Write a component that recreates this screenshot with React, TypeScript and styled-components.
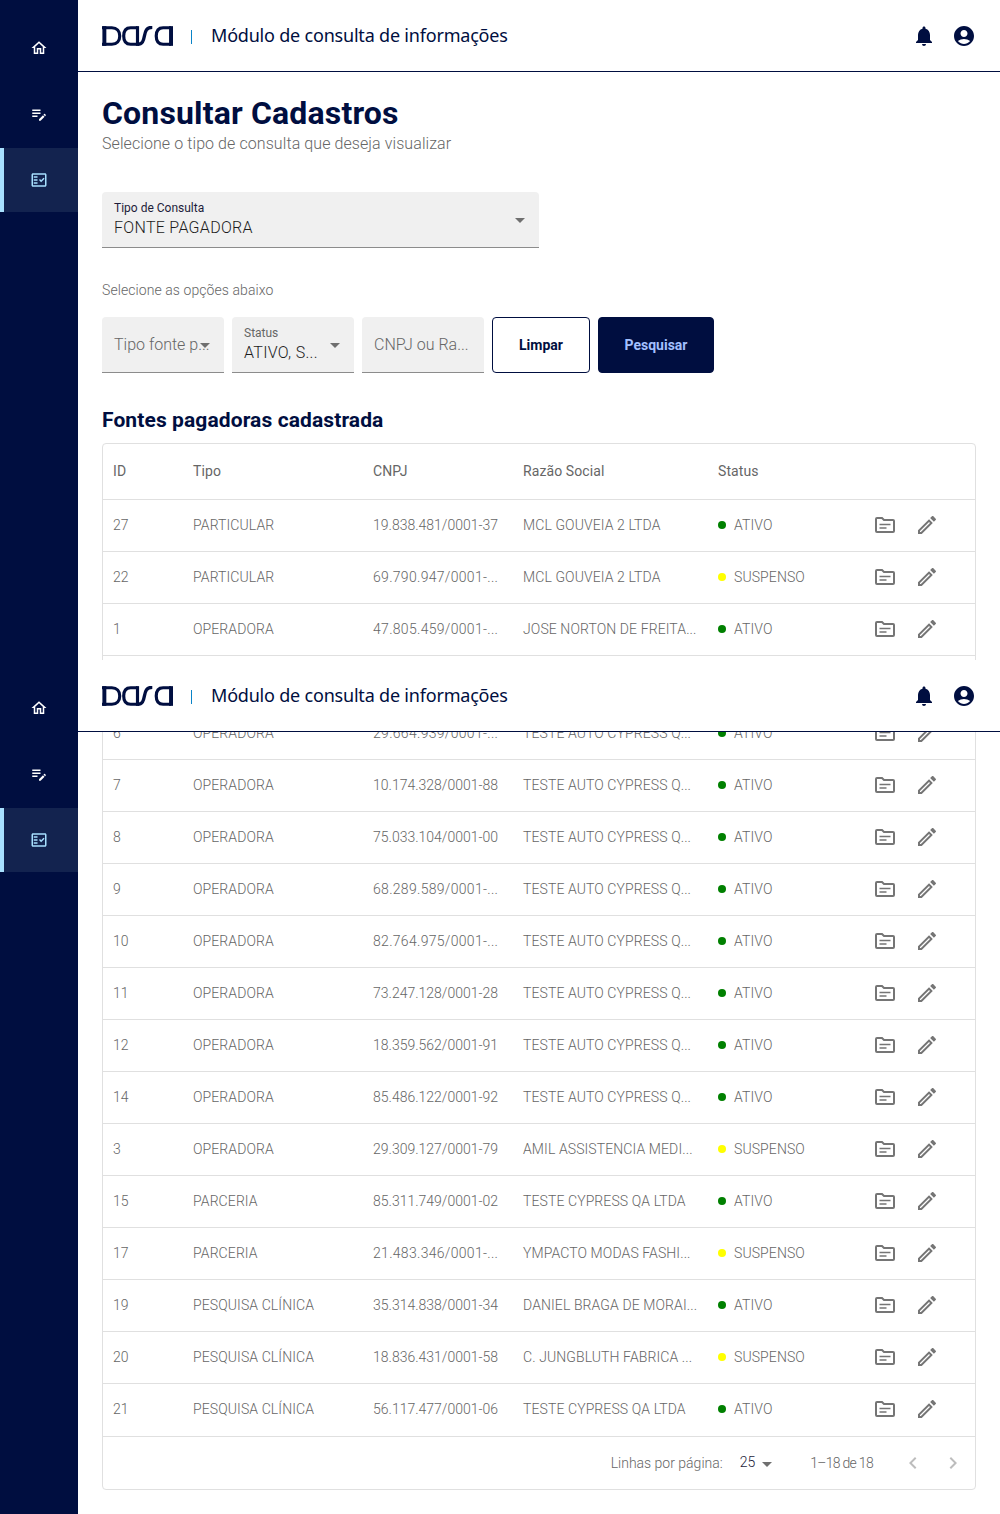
import React from "react";
import styled, { createGlobalStyle } from "styled-components";
import {
  MdOutlineHome,
  MdEditNote,
  MdOutlineFactCheck,
  MdNotifications,
  MdAccountCircle,
  MdOutlineEdit,
  MdChevronLeft,
  MdChevronRight,
} from "react-icons/md";

const NAVY = "#000e40";
const GREY = "#666";
const LINE = "#e0e0e0";
const HEADER_REPEAT_TOP = 660;

const GlobalStyle = createGlobalStyle`
  html, body {
    margin: 0;
    padding: 0;
    background: #fff;
  }
  * {
    box-sizing: border-box;
  }
`;

const Page = styled.div`
  position: relative;
  display: flex;
  width: 1000px;
  height: 1514px;
  overflow: hidden;
  font-family: Roboto, "Liberation Sans", sans-serif;
`;

const Sidebar = styled.aside`
  flex: 0 0 78px;
  background: ${NAVY};
`;

const NavGroup = styled.nav<{ $offset: number }>`
  display: flex;
  flex-direction: column;
  gap: 2px;
  margin-top: ${(p) => p.$offset}px;
`;

const NavItem = styled.div<{ $active?: boolean }>`
  display: flex;
  align-items: center;
  justify-content: center;
  height: 64px;
  color: ${(p) => (p.$active ? "#a8e0ff" : "#fff")};
  background: ${(p) => (p.$active ? "#13234f" : "transparent")};
  border-left: 4px solid ${(p) => (p.$active ? "#a8e0ff" : "transparent")};
  padding-right: 4px;
  font-size: 18px;
`;

const Main = styled.main`
  flex: 1;
  min-width: 0;
  display: flex;
  flex-direction: column;
`;

const Header = styled.header`
  display: flex;
  align-items: center;
  height: 72px;
  flex: 0 0 72px;
  padding: 0 24px;
  background: #fff;
  border-bottom: 1px solid ${NAVY};
`;

const RepeatedHeader = styled(Header)`
  position: absolute;
  top: ${HEADER_REPEAT_TOP}px;
  left: 78px;
  right: 0;
`;

const Divider = styled.span`
  width: 1px;
  height: 14px;
  margin: 2px 19px 0 18px;
  background: #0a84c8;
`;

const ModuleName = styled.span`
  flex: 1;
  margin-top: -1px;
  font-family: "Noto Sans", sans-serif;
  font-size: 18px;
  color: ${NAVY};
  letter-spacing: -0.2px;
`;

const HeaderIcons = styled.div`
  display: flex;
  gap: 16px;
  color: ${NAVY};
  font-size: 24px;
  line-height: 0;
`;

const Content = styled.div`
  padding: 23px 24px 0;
`;

const Title = styled.h1`
  margin: 0 0 2px;
  font-family: Roboto, sans-serif;
  font-size: 32px;
  line-height: 36px;
  font-weight: 700;
  letter-spacing: 0.16px;
  color: ${NAVY};
`;

const Subtitle = styled.p`
  margin: 0 0 37px;
  font-size: 16px;
  line-height: 22px;
  font-weight: 300;
  letter-spacing: 0.08px;
  color: ${GREY};
`;

const Field = styled.div<{ $width: number }>`
  position: relative;
  display: flex;
  flex-direction: column;
  justify-content: center;
  width: ${(p) => p.$width}px;
  height: 56px;
  padding: 0 12px;
  background: #f0f0f0;
  border-bottom: 1px solid #8c8c8c;
  border-radius: 4px 4px 0 0;
  overflow: hidden;
  white-space: nowrap;
`;

const FieldLabel = styled.span<{ $dark?: boolean }>`
  font-size: 12px;
  line-height: 16px;
  color: ${(p) => (p.$dark ? "#1d1d3a" : GREY)};
`;

const FieldValue = styled.span`
  font-size: 16px;
  line-height: 24px;
  font-weight: 300;
  letter-spacing: 0.3px;
  color: #1c1c1c;
`;

const Placeholder = styled.span`
  font-size: 16px;
  line-height: 24px;
  font-weight: 300;
  color: ${GREY};
`;

const Caret = styled.i<{ $right: number }>`
  position: absolute;
  top: 26px;
  right: ${(p) => p.$right}px;
  width: 0;
  height: 0;
  border-left: 5px solid transparent;
  border-right: 5px solid transparent;
  border-top: 5px solid #6f6f6f;
`;

const Hint = styled.p`
  margin: 32px 0 17px;
  font-size: 14px;
  line-height: 20px;
  font-weight: 300;
  letter-spacing: 0.08px;
  color: ${GREY};
`;

const Filters = styled.div`
  display: flex;
  gap: 8px;
`;

const Button = styled.button<{ $primary?: boolean; $width: number }>`
  width: ${(p) => p.$width}px;
  height: 56px;
  padding: 0;
  border: 1px solid ${NAVY};
  border-radius: 4px;
  background: ${(p) => (p.$primary ? NAVY : "#fff")};
  color: ${(p) => (p.$primary ? "#a3c0ff" : NAVY)};
  font-family: Roboto, sans-serif;
  font-size: 14px;
  font-weight: 700;
`;

const SectionTitle = styled.h2`
  margin: 33px 0 9px;
  font-size: 21px;
  line-height: 28px;
  font-weight: 700;
  letter-spacing: 0.1px;
  color: ${NAVY};
`;

const Card = styled.section`
  border: 1px solid ${LINE};
  border-radius: 4px;
`;

const Row = styled.div<{ $head?: boolean }>`
  display: grid;
  grid-template-columns: 80px 180px 150px 195px 1fr 100px;
  align-items: center;
  height: ${(p) => (p.$head ? 56 : 52)}px;
  padding-bottom: 1px;
  border-bottom: 1px solid ${LINE};
  font-size: 14px;
  font-weight: ${(p) => (p.$head ? 400 : 300)};
  letter-spacing: 0.1px;
  color: ${GREY};

  &:nth-last-child(2) {
    height: 53px;
    padding-bottom: 2px;
  }
`;

// row that sits entirely under the repeated header in the capture
const CoveredRow = styled.div`
  height: 52px;
  border-bottom: 1px solid ${LINE};
`;

const Cell = styled.div`
  padding-left: 10px;
  white-space: nowrap;
`;

const CnpjCell = styled(Cell)<{ $clipped: boolean }>`
  letter-spacing: ${(p) => (p.$clipped ? 0.3 : 0)}px;
`;

const StatusCell = styled(Cell)`
  display: flex;
  align-items: center;
  gap: 8px;
`;

const Dot = styled.span<{ $on: boolean }>`
  width: 8px;
  height: 8px;
  border-radius: 50%;
  background: ${(p) => (p.$on ? "#008000" : "#ffff00")};
`;

const Actions = styled.div`
  display: flex;
  align-items: center;
  gap: 20px;
  color: #757575;
  font-size: 24px;
  line-height: 0;
`;

const Footer = styled.footer`
  display: flex;
  align-items: center;
  justify-content: flex-end;
  height: 52px;
  padding-right: 10px;
  font-size: 14px;
  font-weight: 300;
  color: ${GREY};
`;

const PerPage = styled.span`
  display: flex;
  align-items: center;
  gap: 7px;
  margin: -2px 38px 0 17px;
  color: #1c1c3a;
`;

const PageRange = styled.span`
  letter-spacing: -0.7px;
`;

const SmallCaret = styled.i`
  width: 0;
  height: 0;
  margin-top: 4px;
  border-left: 5px solid transparent;
  border-right: 5px solid transparent;
  border-top: 5px solid #6f6f6f;
`;

const Pager = styled.span`
  display: flex;
  gap: 16px;
  margin-left: 28px;
  color: #bdbdbd;
  font-size: 24px;
  line-height: 0;
`;

function DasaLogo() {
  return (
    <svg width="71" height="20" viewBox="0 0 72 20" fill="none" stroke={NAVY} strokeWidth="3.2">
      <path d="M0 1.6h10c5 0 8 3.500 8 8.400s-3 8.400-8 8.400H0" />
      <path d="M2.400 0v20" strokeWidth="4" />
      <path d="M36 1.600H29c-5 0-7 3.500-7 8.400s2 8.400 7 8.400h7" />
      <path d="M36 0v20" />
      <path d="M36 18.400c5 0 6-3 7-8.400s2-8.800 8-8.800" strokeWidth="3.400" />
      <path d="M70 1.600H62c-5 0-7 3.500-7 8.400s2 8.400 7 8.400h8" />
      <path d="M70 0v20" strokeWidth="4" />
    </svg>
  );
}

function FolderIcon() {
  return (
    <svg width="20" height="16" viewBox="0 0 20 16" fill="none" stroke="currentColor" strokeWidth="2">
      <path d="M1 2a1 1 0 0 1 1-1h5l2 2h9a1 1 0 0 1 1 1v10a1 1 0 0 1-1 1H2a1 1 0 0 1-1-1z" />
      <path d="M4.500 7.500h11M4.500 11h7" strokeWidth="1.600" />
    </svg>
  );
}

function TopBar({ as }: { as: typeof Header }) {
  const Bar = as;
  return (
    <Bar>
      <DasaLogo />
      <Divider />
      <ModuleName>Módulo de consulta de informações</ModuleName>
      <HeaderIcons>
        <MdNotifications />
        <MdAccountCircle />
      </HeaderIcons>
    </Bar>
  );
}

function NavIcons({ offset }: { offset: number }) {
  return (
    <NavGroup $offset={offset}>
      <NavItem><MdOutlineHome /></NavItem>
      <NavItem><MdEditNote /></NavItem>
      <NavItem $active><MdOutlineFactCheck /></NavItem>
    </NavGroup>
  );
}

type Source = [string, string, string, string, boolean];

const topRows: Source[] = [
  ["27", "PARTICULAR", "19.838.481/0001-37", "MCL GOUVEIA 2 LTDA", true],
  ["22", "PARTICULAR", "69.790.947/0001-...", "MCL GOUVEIA 2 LTDA", false],
  ["1", "OPERADORA", "47.805.459/0001-...", "JOSE NORTON DE FREITA...", true],
];

const bottomRows: Source[] = [
  ["6", "OPERADORA", "29.664.939/0001-...", "TESTE AUTO CYPRESS Q...", true],
  ["7", "OPERADORA", "10.174.328/0001-88", "TESTE AUTO CYPRESS Q...", true],
  ["8", "OPERADORA", "75.033.104/0001-00", "TESTE AUTO CYPRESS Q...", true],
  ["9", "OPERADORA", "68.289.589/0001-...", "TESTE AUTO CYPRESS Q...", true],
  ["10", "OPERADORA", "82.764.975/0001-...", "TESTE AUTO CYPRESS Q...", true],
  ["11", "OPERADORA", "73.247.128/0001-28", "TESTE AUTO CYPRESS Q...", true],
  ["12", "OPERADORA", "18.359.562/0001-91", "TESTE AUTO CYPRESS Q...", true],
  ["14", "OPERADORA", "85.486.122/0001-92", "TESTE AUTO CYPRESS Q...", true],
  ["3", "OPERADORA", "29.309.127/0001-79", "AMIL ASSISTENCIA MEDI...", false],
  ["15", "PARCERIA", "85.311.749/0001-02", "TESTE CYPRESS QA LTDA", true],
  ["17", "PARCERIA", "21.483.346/0001-...", "YMPACTO MODAS FASHI...", false],
  ["19", "PESQUISA CLÍNICA", "35.314.838/0001-34", "DANIEL BRAGA DE MORAI...", true],
  ["20", "PESQUISA CLÍNICA", "18.836.431/0001-58", "C. JUNGBLUTH FABRICA ...", false],
  ["21", "PESQUISA CLÍNICA", "56.117.477/0001-06", "TESTE CYPRESS QA LTDA", true],
];

function DataRow({ row }: { row: Source }) {
  const [id, tipo, cnpj, razao, on] = row;
  return (
    <Row>
      <Cell>{id}</Cell>
      <Cell>{tipo}</Cell>
      <CnpjCell $clipped={cnpj.endsWith("...")}>{cnpj}</CnpjCell>
      <Cell>{razao}</Cell>
      <StatusCell>
        <Dot $on={on} />
        {on ? "ATIVO" : "SUSPENSO"}
      </StatusCell>
      <Actions>
        <FolderIcon />
        <MdOutlineEdit />
      </Actions>
    </Row>
  );
}

export default function App() {
  return (
    <Page>
      <GlobalStyle />
      <Sidebar>
        <NavIcons offset={16} />
        <NavIcons offset={464} />
      </Sidebar>
      <Main>
        <TopBar as={Header} />
        <Content>
          <Title>Consultar Cadastros</Title>
          <Subtitle>Selecione o tipo de consulta que deseja visualizar</Subtitle>
          <Field $width={437}>
            <FieldLabel $dark>Tipo de Consulta</FieldLabel>
            <FieldValue>FONTE PAGADORA</FieldValue>
            <Caret $right={14} />
          </Field>
          <Hint>Selecione as opções abaixo</Hint>
          <Filters>
            <Field $width={122}>
              <Placeholder>Tipo fonte p...</Placeholder>
              <Caret $right={14} />
            </Field>
            <Field $width={122}>
              <FieldLabel>Status</FieldLabel>
              <FieldValue>ATIVO, S...</FieldValue>
              <Caret $right={14} />
            </Field>
            <Field $width={122}>
              <Placeholder>CNPJ ou Ra...</Placeholder>
            </Field>
            <Button $width={98}>Limpar</Button>
            <Button $width={116} $primary>Pesquisar</Button>
          </Filters>
          <SectionTitle>Fontes pagadoras cadastrada</SectionTitle>
          <Card>
            <Row $head>
              <Cell>ID</Cell>
              <Cell>Tipo</Cell>
              <Cell>CNPJ</Cell>
              <Cell>Razão Social</Cell>
              <Cell>Status</Cell>
              <Cell />
            </Row>
            {topRows.map((row) => (
              <DataRow key={row[0]} row={row} />
            ))}
            <CoveredRow />
            {bottomRows.map((row) => (
              <DataRow key={row[0]} row={row} />
            ))}
            <Footer>
              Linhas por página:
              <PerPage>25 <SmallCaret /></PerPage>
              <PageRange>1–18 de 18</PageRange>
              <Pager>
                <MdChevronLeft />
                <MdChevronRight />
              </Pager>
            </Footer>
          </Card>
        </Content>
      </Main>
      <TopBar as={RepeatedHeader} />
    </Page>
  );
}
